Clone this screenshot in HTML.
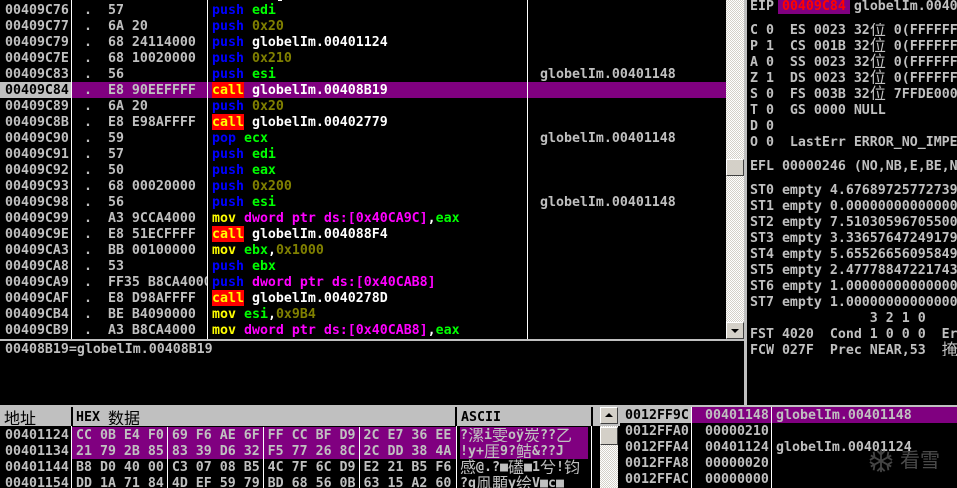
<!DOCTYPE html>
<html><head><meta charset="utf-8">
<style>
html,body{margin:0;padding:0;background:#000}
#r{position:relative;width:957px;height:488px;overflow:hidden;background:#000;font:bold 13.28px/16px "DejaVu Sans Mono",monospace;color:#c0c0c0}
#r div{position:absolute}
pre{position:absolute;margin:0;font:inherit;line-height:16px;white-space:pre;overflow:hidden}
.c,.d,.a{font:normal 16px/16px "WenQuanYi Zen Hei","Noto Sans CJK SC",sans-serif;display:inline-block;width:16px;height:16px;vertical-align:top;overflow:hidden;position:relative}
.c{top:-3px}.d{top:-1px}.a{top:-2px}
.b{color:#00f}.g{color:#0f0}.o{color:#808000}.w{color:#fff}.y{color:#ff0}.m{color:#f0f}
.l{color:#ff0}
.rd{left:212px;width:32px;height:16px;background:#f00}
.sb{background:repeating-conic-gradient(#fff 0 25%,#d4d0c8 0 50%) 0 0/2px 2px}
.btn{background:#d4d0c8;box-sizing:border-box;border:1px solid;border-color:#fff #404040 #404040 #fff}
.h{background:#c0c0c0;color:#000}
</style></head><body>
<div id="r">
<!-- selection bars -->
<div style="left:0;top:82px;width:71px;height:16px;background:#c0c0c0"></div>
<div style="left:72px;top:82px;width:654px;height:16px;background:#800080"></div>
<div style="left:71px;top:0;width:1px;height:339px;background:#fff"></div>
<div style="left:207px;top:0;width:1px;height:339px;background:#fff"></div>
<div style="left:527px;top:0;width:1px;height:339px;background:#fff"></div>
<div style="left:278px;top:0;width:4px;height:1px;background:#fff"></div>
<div class="rd" style="top:82px"></div>
<div class="rd" style="top:114px"></div>
<div class="rd" style="top:226px"></div>
<div class="rd" style="top:290px"></div>

<!-- disasm -->
<pre style="left:5px;top:3px">00409C76
00409C77
00409C79
00409C7E
00409C83
<span style="color:#000">00409C84</span>
00409C89
00409C8B
00409C90
00409C91
00409C92
00409C93
00409C98
00409C99
00409C9E
00409CA3
00409CA8
00409CA9
00409CAF
00409CB4
00409CB9</pre>
<pre style="left:84px;top:3px;width:123px">.  57
.  6A 20
.  68 24114000
.  68 10020000
.  56
.  E8 90EEFFFF
.  6A 20
.  E8 E98AFFFF
.  59
.  57
.  50
.  68 00020000
.  56
.  A3 9CCA4000
.  E8 51ECFFFF
.  BB 00100000
.  53
.  FF35 B8CA4000
.  E8 D98AFFFF
.  BE B4090000
.  A3 B8CA4000</pre>
<pre style="left:212px;top:3px;width:314px"><span class="b">push</span> <span class="g">edi</span>
<span class="b">push</span> <span class="o">0x20</span>
<span class="b">push</span> <span class="w">globelIm.00401124</span>
<span class="b">push</span> <span class="o">0x210</span>
<span class="b">push</span> <span class="g">esi</span>
<span class="l">call</span> <span class="w">globelIm.00408B19</span>
<span class="b">push</span> <span class="o">0x20</span>
<span class="l">call</span> <span class="w">globelIm.00402779</span>
<span class="b">pop</span> <span class="g">ecx</span>
<span class="b">push</span> <span class="g">edi</span>
<span class="b">push</span> <span class="g">eax</span>
<span class="b">push</span> <span class="o">0x200</span>
<span class="b">push</span> <span class="g">esi</span>
<span class="y">mov</span> <span class="m">dword ptr ds:[0x40CA9C]</span><span class="w">,</span><span class="g">eax</span>
<span class="l">call</span> <span class="w">globelIm.004088F4</span>
<span class="y">mov</span> <span class="g">ebx</span><span class="w">,</span><span class="o">0x1000</span>
<span class="b">push</span> <span class="g">ebx</span>
<span class="b">push</span> <span class="m">dword ptr ds:[0x40CAB8]</span>
<span class="l">call</span> <span class="w">globelIm.0040278D</span>
<span class="y">mov</span> <span class="g">esi</span><span class="w">,</span><span class="o">0x9B4</span>
<span class="y">mov</span> <span class="m">dword ptr ds:[0x40CAB8]</span><span class="w">,</span><span class="g">eax</span></pre>
<pre style="left:540px;top:67px">globelIm.00401148</pre>
<pre style="left:540px;top:131px">globelIm.00401148</pre>
<pre style="left:540px;top:195px">globelIm.00401148</pre>

<!-- main scrollbar -->
<div class="sb" style="left:726px;top:0;width:18px;height:339px"></div>
<div class="btn" style="left:726px;top:159px;width:18px;height:17px"></div>
<div class="btn" style="left:726px;top:322px;width:18px;height:17px"></div>
<div style="left:731px;top:329px;width:0;height:0;border-left:4px solid transparent;border-right:4px solid transparent;border-top:4px solid #000"></div>
<div style="left:744px;top:0;width:3px;height:405px;background:#c0c0c0"></div>
<div style="left:0;top:339px;width:745px;height:2px;background:#c0c0c0"></div>

<!-- registers -->
<div style="left:778px;top:0;width:72px;height:14px;background:#800080"></div>
<pre style="left:750px;top:-1px">EIP <span style="color:#f00">00409C84</span> globelIm.00409C84</pre>
<pre style="left:750px;top:23px">C 0  ES 0023 32<span class="c">位</span> 0(FFFFFFFF)
P 1  CS 001B 32<span class="c">位</span> 0(FFFFFFFF)
A 0  SS 0023 32<span class="c">位</span> 0(FFFFFFFF)
Z 1  DS 0023 32<span class="c">位</span> 0(FFFFFFFF)
S 0  FS 003B 32<span class="c">位</span> 7FFDE000(FFF)
T 0  GS 0000 NULL
D 0
O 0  LastErr ERROR_NO_IMPERSONATION</pre>
<pre style="left:750px;top:159px">EFL 00000246 (NO,NB,E,BE,NS,PE,GE,LE)</pre>
<pre style="left:750px;top:183px">ST0 empty 4.67689725772739
ST1 empty 0.00000000000000
ST2 empty 7.51030596705500
ST3 empty 3.33657647249179
ST4 empty 5.65526656095849
ST5 empty 2.47778847221743
ST6 empty 1.00000000000000
ST7 empty 1.00000000000000
               3 2 1 0
FST 4020  Cond 1 0 0 0  Err
FCW 027F  Prec NEAR,53  <span class="c">掩</span></pre>

<!-- info pane -->
<pre style="left:5px;top:342px">00408B19=globelIm.00408B19</pre>
<div style="left:0;top:405px;width:957px;height:2px;background:#c0c0c0"></div>

<!-- dump header -->
<div class="h" style="left:0;top:407px;width:71px;height:19px"></div>
<div class="h" style="left:73px;top:407px;width:382px;height:19px"></div>
<div class="h" style="left:457px;top:407px;width:134px;height:19px"></div>
<div class="h" style="left:593px;top:407px;width:27px;height:19px"></div>
<pre style="left:4px;top:410px;color:#000"><span class="d">地</span><span class="d">址</span></pre>
<pre style="left:76px;top:410px;color:#000">HEX <span class="d">数</span><span class="d">据</span></pre>
<pre style="left:461px;top:410px;color:#000">ASCII</pre>

<!-- dump -->
<div style="left:72px;top:427px;width:384px;height:32px;background:#800080"></div>
<div style="left:460px;top:427px;width:128px;height:32px;background:#800080"></div>
<div style="left:71px;top:426px;width:1px;height:62px;background:#fff"></div>
<div style="left:167px;top:427px;width:1px;height:61px;background:#fff"></div>
<div style="left:263px;top:427px;width:1px;height:61px;background:#fff"></div>
<div style="left:359px;top:427px;width:1px;height:61px;background:#fff"></div>
<div style="left:456px;top:426px;width:1px;height:62px;background:#fff"></div>
<div style="left:591px;top:426px;width:1px;height:62px;background:#fff"></div>
<pre style="left:5px;top:428px">00401124
00401134
00401144
00401154</pre>
<pre style="left:76px;top:428px">CC 0B E4 F0 69 F6 AE 6F FF CC BF D9 2C E7 36 EE
21 79 2B 85 83 39 D6 32 F5 77 26 8C 2C DD 38 4A
B8 D0 40 00 C3 07 08 B5 4C 7F 6C D9 E2 21 B5 F6
DD 1A 71 84 4D EF 59 79 BD 68 56 0B 63 15 A2 60</pre>
<pre style="left:460px;top:428px;width:130px;height:60px">?<span class="a">漯</span>i<span class="a">雯</span>oÿ<span class="a">炭</span>??<span class="a">乙</span>
!y+<span class="a">厓</span>9?<span class="a">鲒</span>&amp;??J
<span class="a">感</span>@.?■<span class="a">礚</span>■1<span class="a">兮</span>!<span class="a">钧</span>
?q<span class="a">凧</span><span class="a">顒</span>y<span class="a">绘</span>V■c■</pre>

<!-- dump scrollbar -->
<div class="sb" style="left:600px;top:426px;width:18px;height:62px"></div>
<div class="btn" style="left:600px;top:407px;width:18px;height:17px"></div>
<div style="left:605px;top:413px;width:0;height:0;border-left:4px solid transparent;border-right:4px solid transparent;border-bottom:4px solid #000"></div>
<div class="btn" style="left:600px;top:427px;width:18px;height:18px"></div>

<!-- stack -->
<div style="left:620px;top:407px;width:71px;height:16px;background:#c0c0c0"></div>
<div style="left:692px;top:407px;width:265px;height:16px;background:#800080"></div>
<div style="left:691px;top:407px;width:1px;height:81px;background:#fff"></div>
<div style="left:771px;top:407px;width:1px;height:81px;background:#fff"></div>
<pre style="left:625px;top:408px"><span style="color:#000">0012FF9C</span>
0012FFA0
0012FFA4
0012FFA8
0012FFAC</pre>
<pre style="left:705px;top:408px">00401148
00000210
00401124
00000020
00000000</pre>
<pre style="left:776px;top:408px">globelIm.00401148

globelIm.00401124</pre>

<!-- watermark -->
<svg style="position:absolute;left:867px;top:449px" width="28" height="24" viewBox="0 0 28 26" fill="none" stroke="#444" stroke-width="2"><path d="M14 1V25M3 7L25 19M25 7L3 19"/><path d="M10 2L14 6L18 2M10 24L14 20L18 24M2 12L7 9L6 3M26 12L21 9L22 3M2 14L7 17L6 23M26 14L21 17L22 23"/></svg>
<pre style="left:900px;top:446px;color:#4a4a4a;font:normal 20px/26px 'WenQuanYi Zen Hei','Noto Sans CJK SC',sans-serif">看雪</pre>
</div>
</body></html>
